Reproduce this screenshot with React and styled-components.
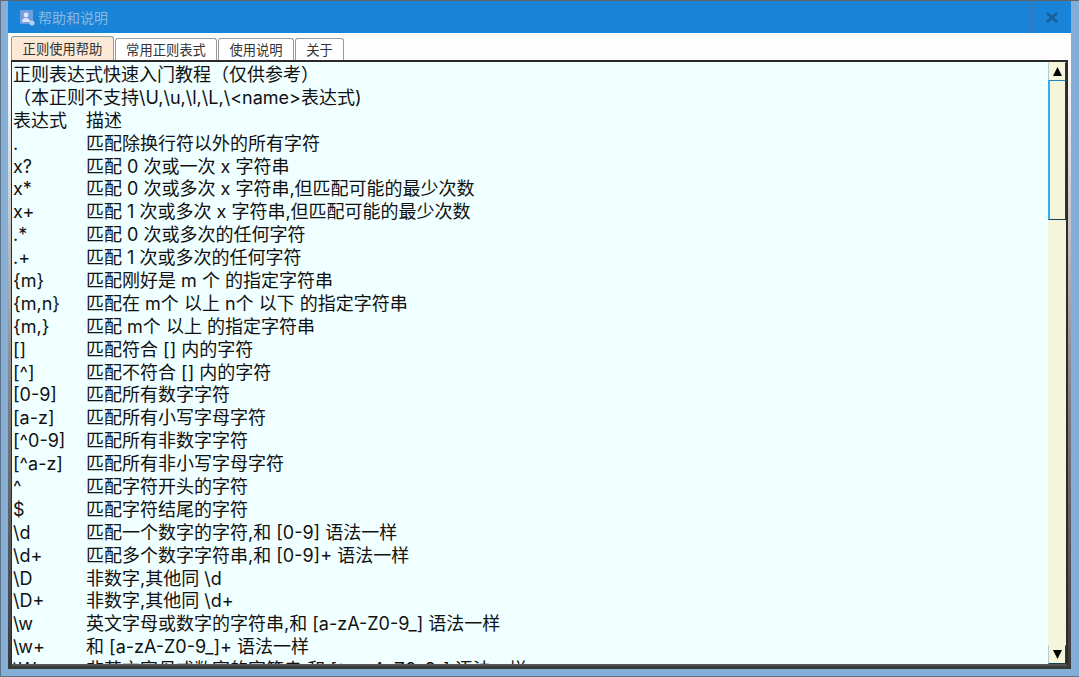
import React from 'react';
import styled, { createGlobalStyle } from 'styled-components';

const Global = createGlobalStyle`
  html, body {
    margin: 0;
    padding: 0;
    width: 100%;
    height: 100%;
    overflow: hidden;
  }
  #root {
    height: 100%;
  }
`;

const Frame = styled.div`
  box-sizing: border-box;
  width: 1079px;
  height: 677px;
  display: flex;
  flex-direction: column;
  background: #85aed6;
  border-top: 1px solid #5f6468;
  border-left: 1px solid #5f7388;
  border-bottom: 1px solid #5f7388;
  padding: 0 8px 7px 7px;
  font-family: Inter, "Noto Sans CJK SC", sans-serif;
`;

const TitleBar = styled.div`
  height: 32px;
  flex: none;
  display: flex;
  align-items: center;
  background: #1883d7;
  padding-left: 11px;
`;

const TitleText = styled.span`
  margin-left: 3px;
  font-size: 14px;
  color: #8ab8e0;
`;

const CloseButton = styled.div`
  margin-left: auto;
  width: 39px;
  height: 32px;
  box-sizing: border-box;
  display: flex;
  align-items: center;
  justify-content: center;
  border-left: 1px solid #3f78ad;
`;

const Body = styled.div`
  flex: 1;
  min-height: 0;
  display: flex;
  flex-direction: column;
  background: linear-gradient(#fdfdfd 30px, #c4c4c4 30%, #7a7a7a 60%, #3a3a3a 100%);
  padding: 0 3px 0 3px;
  border-bottom: 3px solid #3a3a3a;
`;

const Tabs = styled.div`
  height: 27px;
  flex: none;
  display: flex;
  align-items: flex-end;
  margin: 0 -3px;
  padding: 0 3px;
  background: #fdfdfd;
`;

const Tab = styled.div`
  box-sizing: border-box;
  width: ${(p) => p.$w}px;
  height: ${(p) => (p.$active ? 24 : 22)}px;
  display: flex;
  align-items: center;
  justify-content: center;
  margin-right: 1px;
  border: 1px solid #9a9a9a;
  border-bottom: 0;
  border-radius: 3px 3px 0 0;
  background: ${(p) => (p.$active ? '#fbe9d6' : '#ffffff')};
  font-size: 13.3px;
  color: #333;
  white-space: nowrap;
`;

const TextBox = styled.div`
  flex: 1;
  min-height: 0;
  display: flex;
  border: 1px solid #2b2b2b;
  border-top-width: 2px;
  border-right-width: 2px;
  border-bottom: 2px solid #555;
  background: #f0ffff;
  overflow: hidden;
`;

const Lines = styled.div`
  flex: 1;
  min-width: 0;
  overflow: hidden;
  padding: 2px 0 0 1px;
  font-size: 18px;
  line-height: 22.9px;
  color: #111;
`;

const Row = styled.div`
  display: flex;
  white-space: pre;
  height: 22.9px;
`;

const Key = styled.span`
  width: 73px;
  flex: none;
`;

const ScrollBar = styled.div`
  width: 18px;
  flex: none;
  display: flex;
  flex-direction: column;
  background: #f5f5dc;
`;

const ArrowButton = styled.div`
  height: 19px;
  flex: none;
  display: flex;
  align-items: center;
  justify-content: center;
  box-sizing: border-box;
  border: 1px solid #f5f5dc;
  border-left-color: #b9c9c9;
  border-right-color: #16404f;
  border-bottom-color: ${(p) => (p.$down ? '#16404f' : '#1e88c8')};
`;

const Thumb = styled.div`
  height: 139px;
  flex: none;
  box-sizing: border-box;
  border-left: 2px solid #36b0e8;
  border-right: 1px solid #16404f;
  border-bottom: 1px solid #16404f;
  background: #f5f5dc;
`;

const Track = styled.div`
  flex: 1;
`;

const rows = [
  ['.', '匹配除换行符以外的所有字符'],
  ['x?', '匹配 0 次或一次 x 字符串'],
  ['x*', '匹配 0 次或多次 x 字符串,但匹配可能的最少次数'],
  ['x+', '匹配 1 次或多次 x 字符串,但匹配可能的最少次数'],
  ['.*', '匹配 0 次或多次的任何字符'],
  ['.+', '匹配 1 次或多次的任何字符'],
  ['{m}', '匹配刚好是 m 个 的指定字符串'],
  ['{m,n}', '匹配在 m个 以上 n个 以下 的指定字符串'],
  ['{m,}', '匹配 m个 以上 的指定字符串'],
  ['[]', '匹配符合 [] 内的字符'],
  ['[^]', '匹配不符合 [] 内的字符'],
  ['[0-9]', '匹配所有数字字符'],
  ['[a-z]', '匹配所有小写字母字符'],
  ['[^0-9]', '匹配所有非数字字符'],
  ['[^a-z]', '匹配所有非小写字母字符'],
  ['^', '匹配字符开头的字符'],
  ['$', '匹配字符结尾的字符'],
  ['\\d', '匹配一个数字的字符,和 [0-9] 语法一样'],
  ['\\d+', '匹配多个数字字符串,和 [0-9]+ 语法一样'],
  ['\\D', '非数字,其他同 \\d'],
  ['\\D+', '非数字,其他同 \\d+'],
  ['\\w', '英文字母或数字的字符串,和 [a-zA-Z0-9_] 语法一样'],
  ['\\w+', '和 [a-zA-Z0-9_]+ 语法一样'],
  ['\\W', '非英文字母或数字的字符串,和 [^a-zA-Z0-9_] 语法一样'],
];

function AppIcon() {
  return (
    <svg width="16" height="17" viewBox="0 0 16 17">
      <rect x="1" y="1" width="13" height="14" rx="1" fill="#6f9fe0" />
      <circle cx="7" cy="6" r="2.4" fill="#dfe8f5" />
      <path d="M3 13c0-3 2-4 4-4s4 1 4 4z" fill="#dfe8f5" />
      <circle cx="13" cy="14" r="2.5" fill="#b9d3ee" />
    </svg>
  );
}

export default function App() {
  return (
    <>
      <Global />
      <Frame>
        <TitleBar>
          <AppIcon />
          <TitleText>帮助和说明</TitleText>
          <CloseButton>
            <svg width="12" height="11" viewBox="0 0 12 11">
              <path d="M1 1l10 9M11 1L1 10" stroke="#1c5f96" strokeWidth="2.4" />
            </svg>
          </CloseButton>
        </TitleBar>
        <Body>
          <Tabs>
            <Tab $w={103} $active>正则使用帮助</Tab>
            <Tab $w={102}>常用正则表式</Tab>
            <Tab $w={76}>使用说明</Tab>
            <Tab $w={49}>关于</Tab>
          </Tabs>
          <TextBox>
            <Lines>
              <Row>正则表达式快速入门教程（仅供参考）</Row>
              <Row>（本正则不支持\U,\u,\l,\L,\&lt;name&gt;表达式)</Row>
              <Row>
                <Key>表达式</Key>描述
              </Row>
              {rows.map(([k, v]) => (
                <Row key={k}>
                  <Key>{k}</Key>
                  {v}
                </Row>
              ))}
            </Lines>
            <ScrollBar>
              <ArrowButton>
                <svg width="9" height="9" viewBox="0 0 9 9">
                  <path d="M4.5 0L9 9H0z" fill="#000" />
                </svg>
              </ArrowButton>
              <Thumb />
              <Track />
              <ArrowButton $down>
                <svg width="9" height="9" viewBox="0 0 9 9">
                  <path d="M0 0h9L4.5 9z" fill="#000" />
                </svg>
              </ArrowButton>
            </ScrollBar>
          </TextBox>
        </Body>
      </Frame>
    </>
  );
}
